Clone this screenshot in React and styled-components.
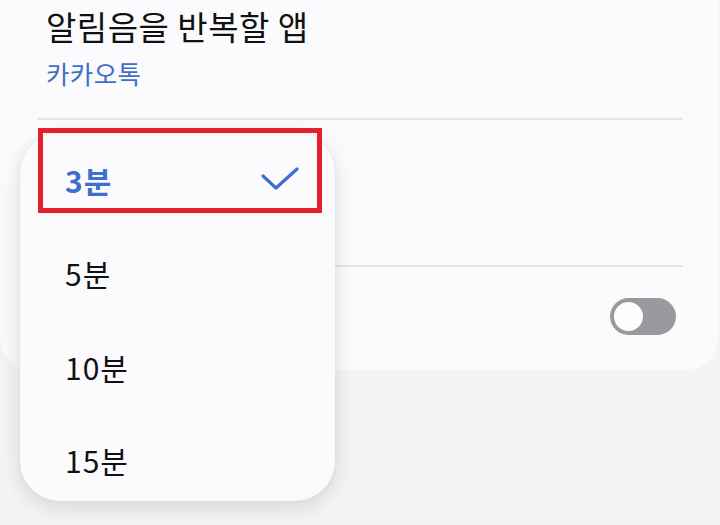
import styled, { createGlobalStyle } from 'styled-components'

const GlobalStyle = createGlobalStyle`
  html, body {
    margin: 0;
    padding: 0;
    background: #f4f4f6;
    font-family: "Noto Sans CJK KR", "Noto Sans", sans-serif;
  }
`;

const Page = styled.div`
  position: relative;
  width: 720px;
  height: 525px;
  overflow: hidden;
`;

const Card = styled.div`
  margin-right: 2px;
  padding: 0 35px 0 37px;
  background: #fbfbfd;
  border-radius: 0 0 32px 32px;
`;

const Row = styled.div`
  display: flex;
  align-items: center;
  justify-content: flex-end;
  height: ${(props) => props.h}px;
  padding-left: 9px;
  padding-right: 7px;
  border-bottom: ${(props) => (props.last ? 'none' : '2px solid #e4e4e6')};
  box-sizing: border-box;
`;

const TextBlock = styled.div`
  display: flex;
  flex-direction: column;
  align-self: flex-start;
  margin-top: 3px;
  margin-right: auto;
`;

const Title = styled.div`
  font-size: 33px;
  line-height: 46px;
  letter-spacing: 0.5px;
  color: #111;
`;

const Sub = styled.div`
  margin-top: 7px;
  font-size: 25.5px;
  line-height: 33px;
  letter-spacing: 0.4px;
  color: #3f6ec6;
`;

const Toggle = styled.div`
  display: flex;
  align-items: center;
  width: 66px;
  height: 37px;
  padding: 0 4px;
  box-sizing: border-box;
  border-radius: 19px;
  background: #9a999e;
  margin-top: -5px;
`;

const Knob = styled.div`
  width: 29px;
  height: 29px;
  border-radius: 50%;
  background: #fdfdfd;
`;

const Menu = styled.div`
  position: absolute;
  left: 20px;
  top: 133px;
  width: 315px;
  height: 368px;
  overflow: hidden;
  background: #fbfbfd;
  border-radius: 40px;
  box-shadow: 0 6px 22px rgba(0, 0, 0, 0.13), 0 0 4px rgba(0, 0, 0, 0.04);
`;

const Item = styled.div`
  display: flex;
  align-items: center;
  justify-content: space-between;
  height: 93.5px;
  padding: 0 36px 0 45px;
  font-size: 30px;
  letter-spacing: 1px;
  font-weight: ${(props) => (props.active ? 700 : 400)};
  color: ${(props) => (props.active ? '#3d6fcf' : '#111')};
`;

const Highlight = styled.div`
  position: absolute;
  left: 38px;
  top: 128px;
  width: 284px;
  height: 85px;
  box-sizing: border-box;
  border: 5px solid #e3202b;
`;

const Check = () => (
  <svg width="40" height="28" viewBox="0 0 40 28">
    <polyline
      points="4,10 17,22 38,3"
      fill="none"
      stroke="#3d6fd0"
      strokeWidth="3.2"
      strokeLinecap="round"
      strokeLinejoin="round"
    />
  </svg>
);

const options = ['3분', '5분', '10분', '15분'];

const App = () => {
  return (
    <Page>
      <GlobalStyle />
      <Card>
        <Row h={120}>
          <TextBlock>
            <Title>알림음을 반복할 앱</Title>
            <Sub>카카오톡</Sub>
          </TextBlock>
        </Row>
        <Row h={147} />
        <Row h={103} last>
          <Toggle>
            <Knob />
          </Toggle>
        </Row>
      </Card>
      <Menu>
        {options.map((opt, i) => (
          <Item key={opt} active={i === 0}>
            {opt}
            {i === 0 && <Check />}
          </Item>
        ))}
      </Menu>
      <Highlight />
    </Page>
  );
};

export default App
